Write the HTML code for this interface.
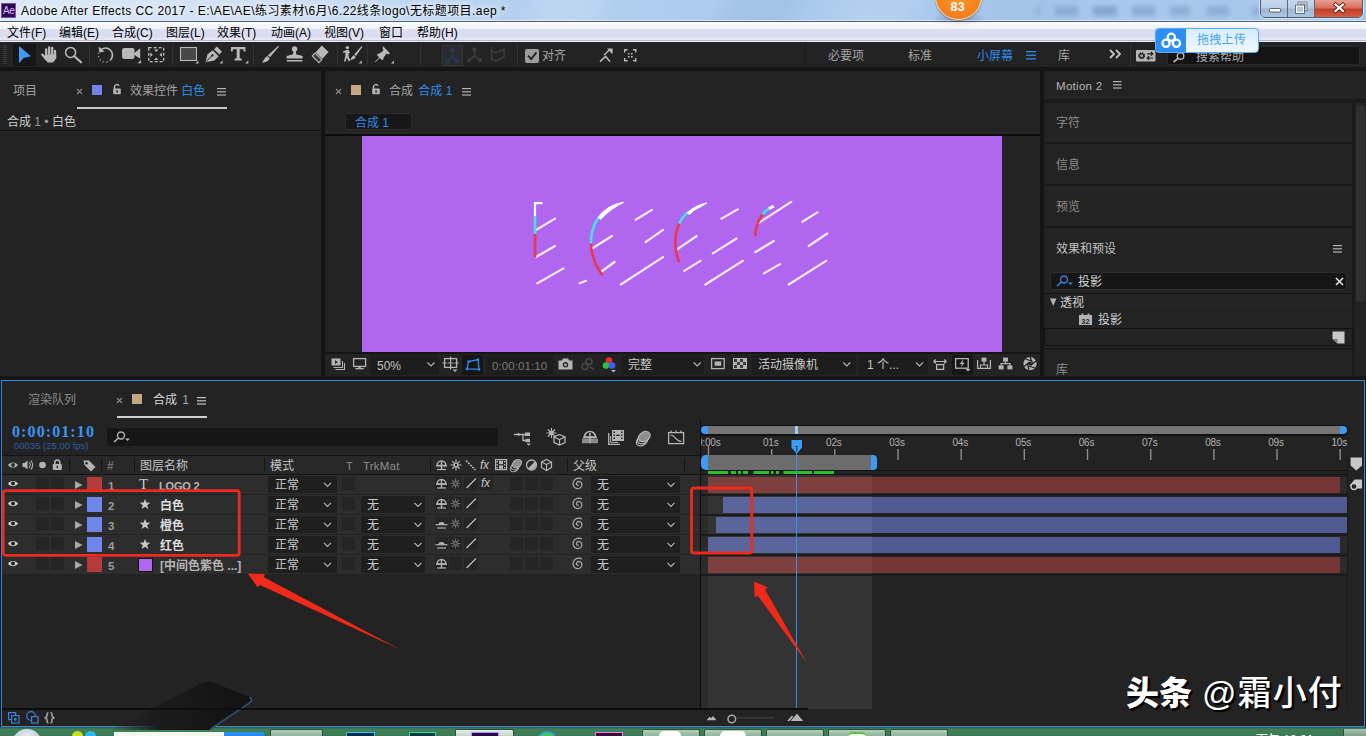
<!DOCTYPE html>
<html lang="zh-CN">
<head>
<meta charset="utf-8">
<title>Adobe After Effects CC 2017</title>
<style>
*{box-sizing:border-box;margin:0;padding:0}
html,body{width:1366px;height:736px;overflow:hidden;background:#151515}
body{position:relative;font-family:"Liberation Sans","Noto Sans CJK SC",sans-serif;font-size:12px;color:#a7a7a7;line-height:1}
.a{position:absolute}
.t{position:absolute;white-space:nowrap;line-height:14px;height:14px}
svg{position:absolute;overflow:visible}
.pn{position:absolute;background:#232323}
.bl{color:#2d8ceb}
.hi{color:#d2d2d2}
.mn{top:25px;font-size:12px;color:#000;line-height:16px;height:16px}
.row{left:2px;width:698px;height:19px;background:#2d2d2d;border-bottom:0}
.cell{height:13px;background:#252525}
.dd{height:17px;background:#1f1f1f;border-radius:1px}
.rl{top:436px;font-size:10px;letter-spacing:-.2px;color:#b2b2b2;line-height:13px;height:13px}
.tb{top:729px;height:7px;background:linear-gradient(180deg,#b4ccb8,#8fb49c);border:1px solid #2c5040;border-bottom:0;border-radius:2px 2px 0 0}
/*SECTION-CSS*/
</style>
</head>
<body>
<!-- ===== TITLE BAR ===== -->
<div id="titlebar" class="a" style="left:0;top:0;width:1366px;height:21px;background:linear-gradient(90deg,#dce9f7 0,#cfe0f3 250px,#b4d0ef 520px,#a9c9ed 800px,#a6c7ec 1366px)"></div>

<div class="a" style="left:1px;top:3px;width:15px;height:15px;background:#2c0a50;border:1px solid #7a4fb0"></div>
<div class="t" style="left:3px;top:4px;font-size:10px;color:#d9b8ff;letter-spacing:-0.3px">Ae</div>
<div class="t" id="ttl" style="left:21px;top:3px;font-size:12px;letter-spacing:.43px;color:#000;line-height:16px;height:16px;text-shadow:0 0 6px #fff,0 0 8px #fff">Adobe After Effects CC 2017 - E:\AE\AE\练习素材\6月\6.22线条logo\无标题项目.aep *</div>
<div class="a" style="left:0;top:0;width:1366px;height:20px;background:linear-gradient(115deg,rgba(255,255,255,0) 38%,rgba(255,255,255,.13) 40%,rgba(255,255,255,.13) 43.500%,rgba(255,255,255,0) 45%,rgba(255,255,255,0) 52%,rgba(90,130,190,.10) 54%,rgba(90,130,190,.10) 57%,rgba(255,255,255,0) 59%,rgba(255,255,255,.12) 63%,rgba(255,255,255,.12) 66%,rgba(255,255,255,0) 68%,rgba(90,130,190,.08) 76%,rgba(255,255,255,0) 80%)"></div>
<div class="a" style="left:0;top:20px;width:1366px;height:1px;background:rgba(225,238,250,.8)"></div>
<!--TITLE-->
<!-- ===== MENU BAR ===== -->
<div id="menubar" class="a" style="left:0;top:21px;width:1366px;height:21px;background:linear-gradient(180deg,#4f5f70 0,#4f5f70 1px,#fdfdfe 1px,#f0f2f9 7.500px,#dde0f1 8.500px,#d9dcf0 15px,#e6e8f5 18.500px,#b4b8c8 19px,#b4b8c8 20px,#eef0f6 20px,#eef0f6 21px)"></div>

<div class="t mn" style="left:7px">文件(F)</div>
<div class="t mn" style="left:59px">编辑(E)</div>
<div class="t mn" style="left:112px">合成(C)</div>
<div class="t mn" style="left:166px">图层(L)</div>
<div class="t mn" style="left:217px">效果(T)</div>
<div class="t mn" style="left:271px">动画(A)</div>
<div class="t mn" style="left:324px">视图(V)</div>
<div class="t mn" style="left:379px">窗口</div>
<div class="t mn" style="left:417px">帮助(H)</div>
<!--MENU-->
<!-- ===== TOOLBAR ===== -->
<div id="toolbar" class="a" style="left:0;top:42px;width:1366px;height:25px;background:#232323"></div>

<svg id="tools1" style="left:0;top:42px" width="700" height="26" viewBox="0 42 700 26" fill="#b9b9b9" stroke="none">
 <g fill="#3a3a3a"><rect x="3" y="45" width="4" height="1"/><rect x="3" y="47" width="4" height="1"/><rect x="3" y="49" width="4" height="1"/><rect x="3" y="51" width="4" height="1"/><rect x="3" y="53" width="4" height="1"/><rect x="3" y="55" width="4" height="1"/><rect x="3" y="57" width="4" height="1"/><rect x="3" y="59" width="4" height="1"/><rect x="3" y="61" width="4" height="1"/><rect x="3" y="63" width="4" height="1"/></g>
 <rect x="13" y="44" width="23" height="22" fill="#161616"/>
 <!-- selection -->
 <path d="M19 46 L31 56.3 L23.6 58 L19 63.2Z" fill="#3d9bf7"/>
 <!-- hand -->
 <g stroke="#b9b9b9" stroke-width="2.3" stroke-linecap="round" fill="none"><path d="M46.2 49.5V56"/><path d="M49.2 47.3V56"/><path d="M52.2 48V56"/><path d="M55 51V57"/><path d="M42.3 54.6L46 59"/></g>
 <path d="M45 54.5H56.2V58.5L53 62.6H47.6L44.3 58Z"/>
 <!-- zoom -->
 <circle cx="70.6" cy="52.4" r="5" fill="none" stroke="#b9b9b9" stroke-width="1.5"/><path d="M74.3 56.3L81 62.3" stroke="#b9b9b9" stroke-width="2.2" stroke-linecap="round"/>
 <rect x="89" y="44" width="1" height="21" fill="#343434"/>
 <!-- rotate -->
 <path d="M100.3 50.2A7 7 0 0 1 110.5 60" fill="none" stroke="#b9b9b9" stroke-width="1.6"/>
 <path d="M110.5 60A7 7 0 0 1 100.3 50.2" fill="none" stroke="#8a8a8a" stroke-width="1.5" stroke-dasharray="1.3 2.2"/>
 <path d="M98.6 46.6L99.4 52.6L104.6 51.6Z"/>
 <!-- camera -->
 <rect x="122" y="48" width="12.5" height="11" rx="2.2"/><path d="M133 54L140.2 48.3V58.8Z"/><path d="M141 60V63.2H137.6Z"/>
 <!-- pan behind -->
 <rect x="148.7" y="47.7" width="15" height="14" fill="none" stroke="#b9b9b9" stroke-width="1.3" stroke-dasharray="3 2"/>
 <path d="M154 49.5H158.4L156.2 52Z M154 60H158.4L156.2 57.5Z M150.3 52.6V57L152.8 54.8Z M162 52.6V57L159.5 54.8Z"/>
 <rect x="172" y="44" width="1" height="21" fill="#343434"/>
 <!-- rect -->
 <rect x="180.5" y="47.5" width="16" height="13" fill="#484848" stroke="#b9b9b9" stroke-width="1.1"/><path d="M198.5 60.5V63.6H195.4Z"/>
 <!-- pen -->
 <path d="M205.4 62.3L207.6 54.2L212.6 50.2L218.6 56.2L214.4 60.6Z"/><path d="M214 49.2L216.8 46.6L222 51.8L219.3 54.5Z"/>
 <path d="M205.8 61.8L211.6 56" stroke="#232323" stroke-width="1"/><circle cx="212.4" cy="55.4" r="1.2" fill="#232323"/><path d="M222.6 60.5V63.6H219.5Z"/>
 <!-- T -->
 <path d="M231 47H245.4V51.4H243.8L243.3 49.2H239.7V58.2L241.8 58.8V60.6H234.6V58.8L236.7 58.2V49.2H233.1L232.6 51.4H231Z"/><path d="M248.3 60.5V63.6H245.2Z"/>
 <rect x="253" y="44" width="1" height="21" fill="#343434"/>
 <!-- brush -->
 <path d="M278.3 45.8L279 46.6L270 57.2L267.8 55.4Z"/><path d="M267.2 56L269.6 58.2C269 61 265.6 62.6 261.8 62.4C263.8 60.8 264.4 58 267.2 56Z"/>
 <!-- stamp -->
 <circle cx="294.6" cy="49" r="2.7"/><path d="M293.2 50.5H296V54.2L302.6 56V58.6H286.6V56L293.2 54.2Z"/><rect x="286.8" y="60" width="15.6" height="1.5"/>
 <!-- eraser -->
 <path d="M321.8 45.4L328.6 52L322.4 58.8L315.6 52.2Z"/><path d="M315 53L321.8 59.6L319 62.6L312.2 56Z" fill="#3a3a3a" stroke="#b9b9b9" stroke-width="1.1"/>
 <rect x="337" y="44" width="1" height="21" fill="#343434"/>
 <!-- roto -->
 <circle cx="347.4" cy="47.6" r="1.7"/><path d="M343 51.6L346.2 50H348.6L350 52.6L348.6 53.4V56.6L350.4 60.6L348.8 61.4L346.8 57.6L345.6 61.4H344L345.4 55.6V52.2L343.6 53.2Z"/>
 <path d="M361.6 46L362.4 46.8L356 56L354.2 54.6Z"/><path d="M353.6 55.2L355.8 57C355 59 352.4 60 350 59.6C351.4 58.4 351.8 56.4 353.6 55.2Z"/><path d="M361.8 60.5V63.6H358.7Z"/>
 <rect x="367" y="44" width="1" height="21" fill="#343434"/>
 <!-- pin -->
 <path d="M382.6 45.8L390 53.2L388.2 54.6L386.6 53.6L383.6 57.6L383.4 59.8L381.6 59.8L379.8 58L375.4 62.2L375 61.8L379.2 57.4L377.4 55.6L377.4 53.8L379.6 53.6L383.6 50.6L382.6 49L383 47.4Z"/><path d="M394 60.5V63.6H390.9Z"/>
 <rect x="420" y="44" width="1" height="21" fill="#343434"/>
 <!-- axis modes (dim) -->
 <rect x="442.5" y="45.5" width="20" height="20" fill="#2a2b2f" stroke="#34353a"/>
 <g stroke="#2c3652" stroke-width="1.8" fill="#2c3652"><path d="M452.5 50V57L447.5 61.5M452.5 57L457.5 61.5" fill="none"/><circle cx="452.5" cy="50" r="1.6"/><circle cx="447.5" cy="61.5" r="1.3"/><circle cx="457.5" cy="61.5" r="1.3"/></g>
 <g stroke="#3d3d3d" stroke-width="1.6" fill="#3d3d3d"><path d="M474.5 50V56L469 60M474.5 56L480 60" fill="none"/><circle cx="474.500" cy="49.500" r="1.4"/><circle cx="469" cy="60.2" r="1.3"/><circle cx="480" cy="60.2" r="1.3"/></g>
 <g stroke="#3d3d3d" stroke-width="1.5" fill="none"><path d="M491.500 47V61"/><path d="M491.500 51L496 53L504 49V57L496 61L491.500 59"/></g>
 <rect x="517" y="44" width="1" height="21" fill="#343434"/>
 <!-- checkbox -->
 <rect x="525" y="49" width="14" height="14" rx="2" fill="#9c9c9c"/><path d="M528 55.6L531.2 59L536.4 52.400" fill="none" stroke="#232323" stroke-width="1.9"/>
 <!-- snap icons -->
 <path d="M600 61.600L605.500 56.400L610 61.600" fill="none" stroke="#b9b9b9" stroke-width="1.500"/><path d="M604 55L610 49.500" stroke="#b9b9b9" stroke-width="1.4"/><path d="M607 48.600H612.600V54.200Z"/>
 <g fill="none" stroke="#b9b9b9" stroke-width="1.400"><path d="M624.700 52.500V49.700H627.500M633 49.700H635.800V52.500M635.800 58V60.800H633M627.500 60.800H624.700V58"/></g><path d="M628 53h1.600v1.600h-1.600zM631 53h1.600v1.600h-1.600zM628 56h1.600v1.600h-1.600zM631 56h1.600v1.600h-1.600z"/>
</svg>
<div class="t" style="left:542px;top:49px;font-size:12px;color:#a4a4a4">对齐</div>

<div class="a" style="left:805px;top:43px;width:1px;height:24px;background:#1a1a1a"></div>
<div class="t" style="left:828px;top:49px;font-size:12px;color:#a4a4a4">必要项</div>
<div class="t" style="left:908px;top:49px;font-size:12px;color:#a4a4a4">标准</div>
<div class="t bl" style="left:977px;top:49px;font-size:12px">小屏幕</div>
<svg style="left:1026px;top:51px" width="10" height="9" fill="#2d8ceb"><rect y="0" width="10" height="1.3"/><rect y="3.6" width="10" height="1.3"/><rect y="7.200" width="10" height="1.3"/></svg>
<div class="t" style="left:1058px;top:49px;font-size:12px;color:#a4a4a4">库</div>
<svg style="left:1109px;top:49px" width="12" height="10" fill="none" stroke="#c4c4c4" stroke-width="1.800"><path d="M1 1L5 5L1 9M7 1L11 5L7 9"/></svg>
<div class="a" style="left:1130px;top:44px;width:1px;height:22px;background:#343434"></div>
<svg style="left:1136px;top:50px" width="20" height="12"><rect width="19.500" height="11.500" rx="1" fill="#b4b4b4"/><circle cx="5.600" cy="5.800" r="2.600" fill="none" stroke="#232323" stroke-width="1.800" stroke-dasharray="1.300 0.750"/><circle cx="5.600" cy="5.800" r="2" fill="none" stroke="#232323" stroke-width="1.200"/><path d="M11 3.800H16.500M14.800 2L16.800 3.800L14.800 5.600M17 8H11.500M13.200 6.200L11.200 8L13.200 9.800" fill="none" stroke="#232323" stroke-width="1.200"/></svg>
<div class="a" style="left:1167px;top:46px;width:193px;height:19px;background:#141414;border:1px solid #2b2b2b;border-radius:2px"></div>
<svg style="left:1172px;top:52px" width="14" height="11" fill="none" stroke="#b0b0b0" stroke-width="1.400"><circle cx="8.500" cy="4" r="3.300"/><path d="M6 6.500L1.500 10" stroke-width="1.700"/></svg>
<div class="t" style="left:1196px;top:50px;font-size:12px;color:#b0b0b0">搜索帮助</div>
<!--TOOLS-->
<!-- ===== PANELS ===== -->
<div id="p-left" class="pn" style="left:0;top:71px;width:321px;height:305px"></div>

<div class="t" style="left:13px;top:84px;font-size:12px;color:#a2a2a2">项目</div>
<svg style="left:76px;top:88px" width="7" height="7" stroke="#8a8a8a" stroke-width="1.100"><path d="M1 1L6 6M6 1L1 6"/></svg>
<div class="a" style="left:92px;top:85px;width:10px;height:10px;background:#7383ea"></div>
<svg class="lock" style="left:112px;top:83px" width="10" height="12"><path d="M2.500 6V3.800A2.400 2.400 0 0 1 7 2.800" fill="none" stroke="#b4b4b4" stroke-width="1.500"/><rect x="1.200" y="5.600" width="7.600" height="5.600" rx=".8" fill="#b4b4b4"/><rect x="4.300" y="7.300" width="1.500" height="2.300" fill="#232323"/></svg>
<div class="t" style="left:130px;top:84px;font-size:12px;color:#a2a2a2">效果控件 <span class="bl">白色</span></div>
<svg style="left:217px;top:88px" width="10" height="8" fill="#b4b4b4"><rect y="0" width="9" height="1.200"/><rect y="3.200" width="9" height="1.200"/><rect y="6.400" width="9" height="1.200"/></svg>
<div class="a" style="left:77px;top:107px;width:150px;height:2px;background:#c6c6c6"></div>
<div class="t" style="left:7px;top:115px;font-size:12px;color:#cdcdcd">合成 <span style="color:#9a9a9a">1 •</span> 白色</div>
<div class="a" style="left:0;top:130px;width:320px;height:1px;background:#101010"></div>
<div class="a" style="left:0;top:131px;width:320px;height:1px;background:#2b2b2b"></div>
<!--LEFT-->
<div id="p-comp" class="pn" style="left:325px;top:71px;width:715px;height:305px"></div>

<svg style="left:335px;top:88px" width="7" height="7" stroke="#8a8a8a" stroke-width="1.100"><path d="M1 1L6 6M6 1L1 6"/></svg>
<div class="a" style="left:351px;top:85px;width:10px;height:10px;background:#c4a882"></div>
<svg class="lock" style="left:371px;top:83px" width="10" height="12"><path d="M2.500 6V3.800A2.400 2.400 0 0 1 7 2.800" fill="none" stroke="#b4b4b4" stroke-width="1.500"/><rect x="1.200" y="5.600" width="7.600" height="5.600" rx=".8" fill="#b4b4b4"/><rect x="4.300" y="7.300" width="1.500" height="2.300" fill="#232323"/></svg>
<div class="t" style="left:389px;top:84px;font-size:12px;color:#a2a2a2">合成 <span class="bl" style="margin-left:2px">合成 1</span></div>
<svg style="left:462px;top:88px" width="10" height="8" fill="#b4b4b4"><rect y="0" width="9" height="1.200"/><rect y="3.200" width="9" height="1.200"/><rect y="6.400" width="9" height="1.200"/></svg>
<div class="a" style="left:345px;top:113px;width:67px;height:17px;background:#171717;border:1px solid #2c2c2c;border-radius:2px"></div>
<div class="t bl" style="left:355px;top:116px;font-size:12px">合成 1</div>
<div class="a" style="left:325px;top:131px;width:715px;height:3px;background:#272727"></div><div class="a" style="left:325px;top:134px;width:715px;height:2px;background:#0d0d0d"></div>
<div class="a" id="canvas" style="left:362px;top:136px;width:640px;height:216px;background:#b066ee"></div>
<div class="a" style="left:325px;top:352px;width:715px;height:2px;background:#151515"></div>
<svg id="art" style="left:362px;top:136px" width="640" height="216" viewBox="362 136 640 216" fill="none" stroke-linecap="round">
 <g stroke="#fdeaff" stroke-width="2.200">
  <path d="M536 230L555 218.600M536 257L555 246M537.400 283.300L563.500 268.400"/>
  <path d="M592 248.500L612 236M600.800 272L614.500 262M579.700 283.300L586 280.800"/>
  <path d="M635.700 219.800L651.900 209.900M645.600 242.200L663 229.800M620.800 284.500L663 257.200"/>
  <path d="M676.700 249.700L696.700 236M684.200 270.900L700.400 260.900"/>
  <path d="M721.500 218.600L737.700 209.400M712.800 253.400L736.500 238.500M705.400 284.500L742.700 260.900"/>
  <path d="M757.600 223.600L791.200 201.900M755.200 252.200L773.800 241M763.900 273.400L780 264.100"/>
  <path d="M802.400 221.800L817.400 212.400M808.700 246L827.300 233.500M788.700 284.500L826.100 260.900"/>
 </g>
 <!-- letter 1 -->
 <g stroke-linecap="butt" stroke-width="2.600">
  <path d="M535 257.500V234" stroke="#e8384f"/><path d="M535 234V216" stroke="#45e0e0"/><path d="M535 216V203.200H542.500" stroke="#fff" stroke-width="2.200"/>
 </g>
 <!-- O 1 -->
 <g stroke-linecap="butt" stroke-width="2.600">
  <path d="M602 274.600Q591.500 260 590.900 243.500" stroke="#e8384f" stroke-linecap="round"/>
  <path d="M590.900 243.500Q591 228 598.400 217.400" stroke="#45e0e0"/>
  <path d="M598.400 217.400Q607 205.500 623.200 202.400Q611 208 600.500 219Z" fill="#fff" stroke="#fff" stroke-width="1.200" stroke-linejoin="round"/>
 </g>
 <!-- O 2 -->
 <g stroke-linecap="butt" stroke-width="2.600">
  <path d="M678.700 261Q671.500 241 679.200 223.600" stroke="#e8384f" stroke-linecap="round"/>
  <path d="M679.200 223.600Q682.500 216.500 688 212.400" stroke="#45e0e0"/>
  <path d="M687.600 212.800Q695 205.500 706.600 203L699 207.500Q693 210 689.500 214.200Z" fill="#fff" stroke="#fff" stroke-width="1.200" stroke-linejoin="round"/>
 </g>
 <!-- O 3 -->
 <g stroke-linecap="butt" stroke-width="2.600">
  <path d="M755.200 234.800Q756.500 222 762.600 214.400" stroke="#e8384f" stroke-linecap="round"/>
  <path d="M762.600 214.400Q765 211 768.800 208.600" stroke="#45e0e0"/>
  <path d="M768.800 208.600L773.800 206.200" stroke="#fff" stroke-width="3"/>
 </g>
</svg>

<!-- comp bottom bar -->
<svg id="cbar" style="left:325px;top:354px" width="715" height="22" viewBox="325 354 715 22" fill="#b4b4b4">
 <!-- always preview -->
 <rect x="331.500" y="358.500" width="9" height="7" fill="#b4b4b4"/><path d="M335 360.300V364L338 362.100Z" fill="#232323"/><path d="M333.500 367.500H342.500V361M335.500 369.500H344.500V363" fill="none" stroke="#b4b4b4" stroke-width="1.100"/>
 <!-- monitor -->
 <rect x="353.600" y="358.600" width="12" height="7.800" fill="none" stroke="#b4b4b4" stroke-width="1.300"/><rect x="358.500" y="366.400" width="2.200" height="1.800"/><rect x="355.500" y="368" width="8.200" height="1.300"/>
 <!-- 50% dropdown -->
 <rect x="370" y="355" width="69" height="20" rx="2" fill="#1d1d1d"/>
 <path d="M427.500 362.500L431 366L434.500 362.500" fill="none" stroke="#b4b4b4" stroke-width="1.200"/>
 <!-- ROI -->
 <rect x="444.600" y="358.600" width="12" height="8.800" fill="none" stroke="#b4b4b4" stroke-width="1.300"/><path d="M450.600 356.500V369.500M442.500 363H446.500M454.600 363H458.700" stroke="#b4b4b4" stroke-width="1.200"/><rect x="449" y="361.400" width="3.200" height="3.200" fill="#232323"/><path d="M450.600 359.500V366.500M447.600 363H453.600" stroke="#b4b4b4" stroke-width="1"/><path d="M452.500 369.500H457.500L455 372Z"/>
 <!-- mask toggle -->
 <rect x="462" y="355" width="21" height="20" rx="2" fill="#161616"/>
 <path d="M467 369L468.600 361.600L478 359.600L479 369.400Z" fill="none" stroke="#2d8ceb" stroke-width="1.300"/><g fill="#2d8ceb"><rect x="465.800" y="367.800" width="2.400" height="2.400"/><rect x="467.400" y="360.400" width="2.400" height="2.400"/><rect x="476.800" y="358.400" width="2.400" height="2.400"/><rect x="477.800" y="368.200" width="2.400" height="2.400"/></g>
 <!-- timecode -->
 <rect x="486" y="355" width="67" height="20" rx="2" fill="#1d1d1d"/>
 <!-- camera snapshot -->
 <path d="M558.500 360.500H561.800L563 358.600H568L569.200 360.500H572.500V369.500H558.500Z"/><circle cx="565.500" cy="364.800" r="2.700" fill="#232323"/><circle cx="565.500" cy="364.800" r="1.400"/>
 <!-- show snapshot (dim) -->
 <g fill="none" stroke="#484848" stroke-width="1.500"><circle cx="589" cy="361.500" r="3"/><circle cx="585" cy="366.500" r="3"/><path d="M590 367L594 369.500"/></g>
 <!-- rgb -->
 <circle cx="609" cy="360.600" r="3.300" fill="#e03030"/><circle cx="606" cy="365.600" r="3.300" fill="#30c040"/><circle cx="612" cy="365.600" r="3.300" fill="#4060f0"/><path d="M611 370H616L613.500 372.500Z"/>
 <!-- quality dropdown -->
 <rect x="622" y="355" width="82" height="20" rx="2" fill="#1d1d1d"/>
 <path d="M693.700 362.500L697.200 366L700.700 362.500" fill="none" stroke="#b4b4b4" stroke-width="1.200"/>
 <!-- safe zones -->
 <rect x="711.600" y="358.600" width="12.600" height="10" fill="none" stroke="#b4b4b4" stroke-width="1.300"/><rect x="714.600" y="361.400" width="6.600" height="4.400"/>
 <!-- transparency grid -->
 <rect x="733" y="358" width="14" height="11" fill="#b4b4b4"/><path d="M734 359h3v3h-3zM740 359h3v3h-3zM737 362h3v3h-3zM743 362h3v3h-3zM734 365h3v3h-3zM740 365h3v3h-3z" fill="#3a3a3a"/>
 <!-- camera dropdown -->
 <rect x="752" y="355" width="104" height="20" rx="2" fill="#1d1d1d"/>
 <path d="M843.300 362.500L846.800 366L850.300 362.500" fill="none" stroke="#b4b4b4" stroke-width="1.200"/>
 <rect x="859" y="355" width="69" height="20" rx="2" fill="#1d1d1d"/>
 <path d="M916 362.500L919.500 366L923 362.500" fill="none" stroke="#b4b4b4" stroke-width="1.200"/>
 <!-- pixel aspect -->
 <path d="M933.500 361.500H946.500M933.500 361.500L936 359.500M933.500 361.500L936 363.500M946.500 361.500L944 359.500M946.500 361.500L944 363.500" fill="none" stroke="#b4b4b4" stroke-width="1.200"/><rect x="936.600" y="364.600" width="7" height="4.800" fill="none" stroke="#b4b4b4" stroke-width="1.300"/>
 <!-- fast previews -->
 <rect x="952" y="355" width="21" height="20" rx="2" fill="#161616"/>
 <rect x="955.600" y="358.600" width="12.600" height="9.600" fill="none" stroke="#b4b4b4" stroke-width="1.300"/><path d="M963.200 359.600L959.600 364H962L960.600 367.600L964.800 362.800H962.400Z"/><path d="M965.500 369H970.500L968 371.500Z"/>
 <!-- timeline -->
 <path d="M977.600 360V368.400H990.400V360" fill="none" stroke="#b4b4b4" stroke-width="1.300"/><rect x="981.500" y="357.600" width="5" height="4"/><path d="M984 361.600V365M980.500 368V365H987.500V368" fill="none" stroke="#b4b4b4" stroke-width="1.200"/>
 <!-- flowchart -->
 <rect x="1003" y="357.600" width="5" height="4"/><rect x="998.600" y="365.400" width="5" height="4"/><rect x="1007.400" y="365.400" width="5" height="4"/><path d="M1005.500 361.600V363.600M1001 365.400V363.600H1010V365.400" fill="none" stroke="#b4b4b4" stroke-width="1.200"/>
 <!-- exposure aperture -->
 <circle cx="1030" cy="363.600" r="6.600"/><g stroke="#232323" stroke-width="1.200" fill="none"><path d="M1030 357L1032.500 363M1036 361L1030.500 365.500M1035 368L1028.500 366M1029 370.200L1027.500 364M1024 366.500L1029.500 362M1025.500 359L1031.500 361"/></g><circle cx="1030" cy="363.600" r="1.900" fill="#232323"/>
</svg>
<div class="t" style="left:377px;top:359px;font-size:12px;color:#c0c0c0">50%</div>
<div class="t" style="left:492px;top:359px;font-size:11.500px;color:#7a7a7a;letter-spacing:.1px">0:00:01:10</div>
<div class="t" style="left:628px;top:358px;font-size:12px;color:#c8c8c8">完整</div>
<div class="t" style="left:758px;top:358px;font-size:12px;color:#c8c8c8">活动摄像机</div>
<div class="t" style="left:867px;top:358px;font-size:12px;color:#c8c8c8">1 个...</div>
<!--COMP-->
<div id="p-right" class="pn" style="left:1044px;top:71px;width:322px;height:305px;background:#1a1a1a"></div>

<div class="pn" style="left:1044px;top:71px;width:322px;height:28px"></div>
<div class="t" style="left:1056px;top:79px;font-size:11.500px;color:#b6b6b6;letter-spacing:.3px">Motion 2</div>
<svg style="left:1113px;top:81px" width="10" height="8" fill="#b4b4b4"><rect y="0" width="8.500" height="1.200"/><rect y="3.200" width="8.500" height="1.200"/><rect y="6.400" width="8.500" height="1.200"/></svg>
<div class="pn" style="left:1044px;top:103px;width:308px;height:39px"></div>
<div class="pn" style="left:1044px;top:144px;width:308px;height:40px"></div>
<div class="pn" style="left:1044px;top:186px;width:308px;height:40px"></div>
<div class="pn" style="left:1044px;top:228px;width:308px;height:120px"></div>
<div class="pn" style="left:1044px;top:350px;width:308px;height:26px"></div>
<div class="a" style="left:1355px;top:103px;width:11px;height:273px;background:#232323"></div>
<div class="a" style="left:1356px;top:105px;width:9px;height:197px;background:#2f2f2f;border-radius:4px"></div>
<div class="t" style="left:1056px;top:116px;font-size:12px;color:#8c8c8c">字符</div>
<div class="t" style="left:1056px;top:158px;font-size:12px;color:#8c8c8c">信息</div>
<div class="t" style="left:1056px;top:200px;font-size:12px;color:#8c8c8c">预览</div>
<div class="t" style="left:1056px;top:242px;font-size:12px;color:#c2c2c2">效果和预设</div>
<svg style="left:1333px;top:245px" width="10" height="8" fill="#b4b4b4"><rect y="0" width="9" height="1.200"/><rect y="3.200" width="9" height="1.200"/><rect y="6.400" width="9" height="1.200"/></svg>
<div class="a" style="left:1050px;top:272px;width:297px;height:18px;background:#161616;border:1px solid #2d2d2d;border-radius:3px"></div>
<svg style="left:1056px;top:275px" width="18" height="12" fill="none" stroke="#3a7fd8" stroke-width="1.400"><circle cx="8" cy="4.500" r="3.500"/><path d="M5.500 7L1 11" stroke-width="1.600"/><path d="M12 7.500H17L14.500 10Z" fill="#3a7fd8" stroke="none"/></svg>
<div class="t" style="left:1078px;top:275px;font-size:12px;color:#d4d4d4">投影</div>
<svg style="left:1335px;top:277px" width="9" height="9" stroke="#e0e0e0" stroke-width="1.600"><path d="M1 1L8 8M8 1L1 8"/></svg>
<div class="a" style="left:1044px;top:293px;width:308px;height:1px;background:#141414"></div>
<svg style="left:1050px;top:298px" width="7" height="9" fill="#b4b4b4"><path d="M0 .5H6.500L3.250 8Z"/></svg>
<div class="t" style="left:1060px;top:296px;font-size:12px;color:#cfcfcf">透视</div>
<div class="a" style="left:1044px;top:310px;width:308px;height:1px;background:#1f1f1f"></div>
<svg style="left:1079px;top:313px" width="13" height="12"><path d="M0 2H2.500V0.500H4.500V2H8.500V0.500H10.500V2H13V12H0Z" fill="#b4b4b4"/><text x="6.500" y="10.500" font-family="Liberation Sans,sans-serif" font-size="7.500" font-weight="bold" fill="#232323" text-anchor="middle">32</text></svg>
<div class="t" style="left:1098px;top:313px;font-size:12px;color:#cfcfcf">投影</div>
<div class="a" style="left:1044px;top:328px;width:309px;height:18px;border:1px solid #121212;background:#232323"></div>
<svg style="left:1332px;top:331px" width="13" height="13"><path d="M0.500 0.500H12.500V12.500H5.500L0.500 8Z" fill="#c8c8c8"/><path d="M0.500 8H5.500V12.500Z" fill="#7c7c7c"/></svg>
<div class="t" style="left:1056px;top:363px;font-size:12px;color:#8c8c8c">库</div>
<!--RIGHT-->
<!-- ===== TIMELINE ===== -->
<div id="p-tl" class="pn" style="left:1px;top:380px;width:1364px;height:347px;border:1px solid #3b86dc"></div>
<div class="t" style="left:28px;top:393px;font-size:12px;color:#8c8c8c">渲染队列</div>
<svg style="left:116px;top:397px" width="7" height="7" stroke="#8a8a8a" stroke-width="1.100"><path d="M1 1L6 6M6 1L1 6"/></svg>
<div class="a" style="left:132px;top:394px;width:10px;height:10px;background:#c4a882"></div>
<div class="t" style="left:153px;top:393px;font-size:12px;color:#d6d6d6">合成 <span style="color:#a8a8a8;margin-left:2px">1</span></div>
<svg style="left:197px;top:397px" width="10" height="8" fill="#c4c4c4"><rect y="0" width="9" height="1.200"/><rect y="3.200" width="9" height="1.200"/><rect y="6.400" width="9" height="1.200"/></svg>
<div class="a" style="left:117px;top:416px;width:90px;height:2px;background:#d0d0d0"></div>
<div class="t" style="left:12px;top:423px;font-family:'Liberation Serif',serif;font-weight:bold;font-size:16px;line-height:18px;height:18px;letter-spacing:1.1px;color:#3b93ef">0:00:01:10</div>
<div class="t" style="left:14px;top:440px;font-size:9.500px;line-height:12px;height:12px;color:#2c5fa4">00035 (25.00 fps)</div>
<div class="a" style="left:107px;top:428px;width:391px;height:18px;background:#161616;border-radius:2px"></div>
<svg style="left:113px;top:431px" width="18" height="12" fill="none" stroke="#b4b4b4" stroke-width="1.400"><circle cx="8" cy="4.500" r="3.500"/><path d="M5.500 7L1 11" stroke-width="1.600"/><path d="M12 7.500H17L14.500 10Z" fill="#b4b4b4" stroke="none"/></svg>
<svg style="left:510px;top:426px" width="180" height="22" viewBox="510 426 180 22" fill="#b4b4b4">
 <path d="M514 434.500H521M521 434.500H525M523 434.500V440.500H526" fill="none" stroke="#b4b4b4" stroke-width="1.300"/><path d="M518 432.800L521 434.500L518 436.200Z"/><rect x="525" y="432.500" width="5" height="3.600"/><rect x="525.500" y="438.800" width="4.500" height="3.400"/><path d="M526.500 443.500H531L528.750 445.700Z"/>
 <g stroke="#b4b4b4" stroke-width="1.200"><path d="M551.500 428V438M546.500 433H556.500M548 429.500L555 436.500M555 429.500L548 436.500"/></g><circle cx="551.500" cy="433" r="2.300"/>
 <path d="M559.500 434.500L565 437V442.500L559.500 445L554 442.500V437Z" fill="#232323" stroke="#b4b4b4" stroke-width="1.300"/><path d="M554 437L559.500 439.500L565 437M559.500 439.500V445" fill="none" stroke="#b4b4b4" stroke-width="1.200"/>
 <path d="M584.500 437A5.500 5.500 0 0 1 595.500 437Z" fill="none" stroke="#b4b4b4" stroke-width="1.500"/><path d="M583 436.600H597V438.200H583Z"/><rect x="589.200" y="433" width="1.600" height="8"/><rect x="582" y="438.600" width="16" height="4.600" fill="#8a8a8a"/><rect x="589.200" y="438.600" width="1.600" height="4.600" fill="#b4b4b4"/>
 <rect x="612" y="430" width="12" height="11" /><path d="M613.500 431.500h1.500v1.500h-1.500zM613.500 434.500h1.500v1.500h-1.500zM613.500 437.500h1.500v1.500h-1.500zM621 431.500h1.500v1.500h-1.500zM621 434.500h1.500v1.500h-1.500zM621 437.500h1.500v1.500h-1.500z" fill="#232323"/><rect x="616.200" y="434.700" width="3.600" height="1.300" fill="#232323"/><path d="M608.700 433V444.300H620" fill="none" stroke="#b4b4b4" stroke-width="1.300"/><path d="M610.600 436V442.400H618" fill="none" stroke="#b4b4b4" stroke-width="1"/>
 <ellipse cx="642" cy="441" rx="6" ry="4.300" transform="rotate(-32 642 441)" fill="#232323" stroke="#b4b4b4" stroke-width="1.200"/><ellipse cx="643" cy="439" rx="6" ry="4.300" transform="rotate(-32 643 439)" fill="#232323" stroke="#b4b4b4" stroke-width="1.200"/><ellipse cx="644.300" cy="436.600" rx="6.300" ry="4.600" transform="rotate(-32 644.300 436.600)" fill="#8e8e8e" stroke="#b4b4b4" stroke-width="1.200"/>
 <rect x="668.600" y="432.600" width="15" height="11" fill="none" stroke="#b4b4b4" stroke-width="1.300"/><path d="M671 430.500V432.500M676 430.500V432.500M681 430.500V432.500" stroke="#b4b4b4" stroke-width="1.300"/><path d="M670.500 435C675.500 435 675.500 441.500 681.500 441.500" fill="none" stroke="#b4b4b4" stroke-width="1.200"/>
</svg>
<div class="a" style="left:2px;top:455px;width:698px;height:1px;background:#141414"></div>
<div class="a" style="left:2px;top:456px;width:698px;height:18px;background:#282828"></div>
<div class="a" style="left:2px;top:474px;width:698px;height:1px;background:#151515"></div>
<!--ROWS-BEGIN-->
<svg id="tlhead" style="left:0;top:456px" width="700" height="18" viewBox="0 456 700 18" fill="#b4b4b4">
 <path d="M8 465C10 461.600 16 461.600 18 465C16 468.400 10 468.400 8 465Z"/><circle cx="13" cy="465" r="1.900" fill="#282828"/>
 <path d="M22.500 463H24.500L27.500 460.500V469.500L24.500 467H22.500Z"/><path d="M29 462.200A4 4 0 0 1 29 467.800M30.800 460.600A6.200 6.200 0 0 1 30.800 469.400" fill="none" stroke="#b4b4b4" stroke-width="1.100"/>
 <circle cx="42.500" cy="465" r="3.300"/>
 <path d="M54.800 464.500V462.600A2.500 2.500 0 0 1 59.800 462.600V464.500" fill="none" stroke="#b4b4b4" stroke-width="1.500"/><rect x="52.800" y="464" width="9" height="6" rx=".8"/><rect x="56.600" y="465.800" width="1.400" height="2.400" fill="#282828"/>
 <rect x="69" y="458" width="1" height="14" fill="#161616"/>
 <path d="M83.500 460.500H89L95.500 467L91 471.500L84.500 465Z"/><circle cx="86.600" cy="463.200" r="1.200" fill="#282828"/>
 <rect x="101" y="458" width="1" height="14" fill="#161616"/>
 <rect x="134" y="458" width="1" height="14" fill="#161616"/>
 <rect x="264" y="458" width="1" height="14" fill="#161616"/>
 <rect x="430" y="458" width="1" height="14" fill="#161616"/>
 <g><path d="M437 465.500A4.500 4.500 0 0 1 446 465.500Z" fill="none" stroke="#b4b4b4" stroke-width="1.300"/><path d="M436 465H447V466.400H436Z"/><rect x="440.800" y="461.500" width="1.400" height="8"/><path d="M437 469.500H446" stroke="#b4b4b4" stroke-width="1.200"/></g>
 <g stroke="#b4b4b4" stroke-width="1.200"><path d="M456 459.500V470.500M450.500 465H461.500M452.200 461.200L459.800 468.800M459.800 461.200L452.200 468.800"/></g><circle cx="456" cy="465" r="2.600"/><circle cx="456" cy="465" r="1.200" fill="#282828"/>
 <path d="M466 460.500L475.500 470" stroke="#b4b4b4" stroke-width="1.500" stroke-dasharray="2 1"/>
 <rect x="495.600" y="459.600" width="11" height="10" fill="none" stroke="#b4b4b4" stroke-width="1.200"/><path d="M496.500 461h1.400v1.400h-1.400zM496.500 464h1.400v1.400h-1.400zM496.500 467h1.400v1.400h-1.400zM504 461h1.400v1.400h-1.400zM504 464h1.400v1.400h-1.400zM504 467h1.400v1.400h-1.400z"/><rect x="499" y="460.800" width="4" height="3.400"/><rect x="499" y="465.400" width="4" height="3.400"/>
 <ellipse cx="514.500" cy="468" rx="4.600" ry="3.300" transform="rotate(-32 514.500 468)" fill="#282828" stroke="#b4b4b4" stroke-width="1"/><ellipse cx="515.500" cy="466" rx="4.600" ry="3.300" transform="rotate(-32 515.500 466)" fill="#282828" stroke="#b4b4b4" stroke-width="1"/><ellipse cx="517" cy="463.600" rx="5" ry="3.600" transform="rotate(-32 517 463.600)" fill="#8e8e8e" stroke="#b4b4b4" stroke-width="1"/>
 <circle cx="531.500" cy="465" r="5" fill="none" stroke="#b4b4b4" stroke-width="1.300"/><path d="M535 461.500A5 5 0 0 1 528 468.500Z"/>
 <path d="M546.500 459.500L551.500 462V467.500L546.500 470.500L541.500 467.500V462Z" fill="none" stroke="#b4b4b4" stroke-width="1.200"/><path d="M541.500 462L546.500 464.500L551.500 462M546.500 464.500V470.500" fill="none" stroke="#b4b4b4" stroke-width="1.100"/>
 <rect x="567" y="458" width="1" height="14" fill="#161616"/>
 <rect x="684" y="458" width="1" height="14" fill="#161616"/>
</svg>
<div class="t" style="left:107px;top:459px;font-size:12px;color:#8e8e8e">#</div>
<div class="t" style="left:140px;top:459px;font-size:12px;color:#c2c2c2">图层名称</div>
<div class="t" style="left:270px;top:459px;font-size:12px;color:#c2c2c2">模式</div>
<div class="t" style="left:346px;top:459px;font-size:11px;color:#8e8e8e">T</div>
<div class="t" style="left:363px;top:459px;font-size:11.500px;color:#8e8e8e;letter-spacing:.2px">TrkMat</div>
<div class="t" style="left:480px;top:458px;font-size:12px;font-style:italic;color:#c2c2c2;letter-spacing:-.3px">fx</div>
<div class="t" style="left:573px;top:459px;font-size:12px;color:#c2c2c2">父级</div>
<div class="a row" style="top:475px"></div>
<div class="a cell" style="left:36px;top:477px;width:13px"></div><div class="a cell" style="left:51px;top:477px;width:13px"></div>
<div class="a" style="left:87px;top:477px;width:15px;height:15px;background:#b53b3b"></div>
<div class="t" style="left:108px;top:479px;font-size:11.500px;font-weight:bold;color:#9c9c9c">1</div>
<div class="t" style="left:159px;top:479px;font-size:11px;font-weight:bold;color:#b8b8b8;letter-spacing:-.2px">LOGO 2</div>
<div class="a dd" style="left:268px;top:476px;width:69px"></div><div class="t" style="left:275px;top:478px;font-size:12px;color:#c8c8c8">正常</div>
<div class="a cell" style="left:342px;top:477px;width:13px"></div>
<div class="a cell" style="left:435px;top:477px;width:13px"></div>
<div class="a cell" style="left:449px;top:477px;width:13px"></div>
<div class="a cell" style="left:464px;top:477px;width:14px"></div>
<div class="a cell" style="left:480px;top:477px;width:13px"></div>
<div class="a cell" style="left:510px;top:477px;width:13px"></div>
<div class="a cell" style="left:525px;top:477px;width:13px"></div>
<div class="a cell" style="left:540px;top:477px;width:13px"></div>
<div class="a dd" style="left:591px;top:476px;width:89px"></div><div class="t" style="left:597px;top:478px;font-size:12px;color:#c8c8c8">无</div>
<div class="a row" style="top:495px"></div>
<div class="a cell" style="left:36px;top:497px;width:13px"></div><div class="a cell" style="left:51px;top:497px;width:13px"></div>
<div class="a" style="left:87px;top:497px;width:15px;height:15px;background:#6f86ea"></div>
<div class="t" style="left:108px;top:499px;font-size:11.500px;font-weight:bold;color:#9c9c9c">2</div>
<div class="t" style="left:160px;top:499px;font-size:12px;font-weight:bold;color:#dcdcdc">白色</div>
<div class="a dd" style="left:268px;top:496px;width:69px"></div><div class="t" style="left:275px;top:498px;font-size:12px;color:#c8c8c8">正常</div>
<div class="a cell" style="left:342px;top:497px;width:13px"></div>
<div class="a dd" style="left:361px;top:496px;width:64px"></div><div class="t" style="left:367px;top:498px;font-size:12px;color:#c8c8c8">无</div>
<div class="a cell" style="left:435px;top:497px;width:13px"></div>
<div class="a cell" style="left:449px;top:497px;width:13px"></div>
<div class="a cell" style="left:464px;top:497px;width:14px"></div>
<div class="a cell" style="left:510px;top:497px;width:13px"></div>
<div class="a cell" style="left:525px;top:497px;width:13px"></div>
<div class="a cell" style="left:540px;top:497px;width:13px"></div>
<div class="a dd" style="left:591px;top:496px;width:89px"></div><div class="t" style="left:597px;top:498px;font-size:12px;color:#c8c8c8">无</div>
<div class="a row" style="top:515px"></div>
<div class="a cell" style="left:36px;top:517px;width:13px"></div><div class="a cell" style="left:51px;top:517px;width:13px"></div>
<div class="a" style="left:87px;top:517px;width:15px;height:15px;background:#6f86ea"></div>
<div class="t" style="left:108px;top:519px;font-size:11.500px;font-weight:bold;color:#9c9c9c">3</div>
<div class="t" style="left:160px;top:519px;font-size:12px;font-weight:bold;color:#dcdcdc">橙色</div>
<div class="a dd" style="left:268px;top:516px;width:69px"></div><div class="t" style="left:275px;top:518px;font-size:12px;color:#c8c8c8">正常</div>
<div class="a cell" style="left:342px;top:517px;width:13px"></div>
<div class="a dd" style="left:361px;top:516px;width:64px"></div><div class="t" style="left:367px;top:518px;font-size:12px;color:#c8c8c8">无</div>
<div class="a cell" style="left:435px;top:517px;width:13px"></div>
<div class="a cell" style="left:449px;top:517px;width:13px"></div>
<div class="a cell" style="left:464px;top:517px;width:14px"></div>
<div class="a cell" style="left:510px;top:517px;width:13px"></div>
<div class="a cell" style="left:525px;top:517px;width:13px"></div>
<div class="a cell" style="left:540px;top:517px;width:13px"></div>
<div class="a dd" style="left:591px;top:516px;width:89px"></div><div class="t" style="left:597px;top:518px;font-size:12px;color:#c8c8c8">无</div>
<div class="a row" style="top:535px"></div>
<div class="a cell" style="left:36px;top:537px;width:13px"></div><div class="a cell" style="left:51px;top:537px;width:13px"></div>
<div class="a" style="left:87px;top:537px;width:15px;height:15px;background:#6f86ea"></div>
<div class="t" style="left:108px;top:539px;font-size:11.500px;font-weight:bold;color:#9c9c9c">4</div>
<div class="t" style="left:160px;top:539px;font-size:12px;font-weight:bold;color:#dcdcdc">红色</div>
<div class="a dd" style="left:268px;top:536px;width:69px"></div><div class="t" style="left:275px;top:538px;font-size:12px;color:#c8c8c8">正常</div>
<div class="a cell" style="left:342px;top:537px;width:13px"></div>
<div class="a dd" style="left:361px;top:536px;width:64px"></div><div class="t" style="left:367px;top:538px;font-size:12px;color:#c8c8c8">无</div>
<div class="a cell" style="left:435px;top:537px;width:13px"></div>
<div class="a cell" style="left:449px;top:537px;width:13px"></div>
<div class="a cell" style="left:464px;top:537px;width:14px"></div>
<div class="a cell" style="left:510px;top:537px;width:13px"></div>
<div class="a cell" style="left:525px;top:537px;width:13px"></div>
<div class="a cell" style="left:540px;top:537px;width:13px"></div>
<div class="a dd" style="left:591px;top:536px;width:89px"></div><div class="t" style="left:597px;top:538px;font-size:12px;color:#c8c8c8">无</div>
<div class="a row" style="top:555px"></div>
<div class="a cell" style="left:36px;top:557px;width:13px"></div><div class="a cell" style="left:51px;top:557px;width:13px"></div>
<div class="a" style="left:87px;top:557px;width:15px;height:15px;background:#b53b3b"></div>
<div class="t" style="left:108px;top:559px;font-size:11.500px;font-weight:bold;color:#9c9c9c">5</div>
<div class="t" style="left:160px;top:559px;font-size:12px;font-weight:bold;color:#b4b4b4">[中间色紫色 ...]</div>
<div class="a dd" style="left:268px;top:556px;width:69px"></div><div class="t" style="left:275px;top:558px;font-size:12px;color:#c8c8c8">正常</div>
<div class="a cell" style="left:342px;top:557px;width:13px"></div>
<div class="a dd" style="left:361px;top:556px;width:64px"></div><div class="t" style="left:367px;top:558px;font-size:12px;color:#c8c8c8">无</div>
<div class="a cell" style="left:435px;top:557px;width:13px"></div>
<div class="a cell" style="left:449px;top:557px;width:13px"></div>
<div class="a cell" style="left:464px;top:557px;width:14px"></div>
<div class="a cell" style="left:510px;top:557px;width:13px"></div>
<div class="a cell" style="left:525px;top:557px;width:13px"></div>
<div class="a cell" style="left:540px;top:557px;width:13px"></div>
<div class="a dd" style="left:591px;top:556px;width:89px"></div><div class="t" style="left:597px;top:558px;font-size:12px;color:#c8c8c8">无</div>
<svg id="tlrows" style="left:0;top:475px" width="700" height="100" viewBox="0 475 700 100" fill="#b4b4b4">
<path d="M8 483.5C10 480.0 16 480.0 18 483.5C16 487.0 10 487.0 8 483.5Z" fill="#d0d0d0"/><circle cx="13" cy="483.5" r="1.900" fill="#1e1e1e"/>
<path d="M75 481.0L82.500 485.0L75 489.0Z" fill="#a8a8a8"/>
<path d="M324.0 482.8L327.5 486.3L331.0 482.8" fill="none" stroke="#b4b4b4" stroke-width="1.200"/>
<path d="M667.5 482.8L671 486.3L674.5 482.8" fill="none" stroke="#b4b4b4" stroke-width="1.200"/>
<path d="M437 484.0A4.500 4.500 0 0 1 446 484.0Z" fill="none" stroke="#b4b4b4" stroke-width="1.300"/><path d="M436 483.5H447V484.9H436Z"/><rect x="440.800" y="480.0" width="1.400" height="8"/><path d="M437 488.0H446" stroke="#b4b4b4" stroke-width="1.200"/>
<g stroke="#6a6a6a" stroke-width="1.100"><path d="M455.500 478.5V488.5M450.500 483.5H460.500M452 480.0L459 487.0M459 480.0L452 487.0"/></g><circle cx="455.500" cy="483.5" r="2.400" fill="#6a6a6a"/><circle cx="455.500" cy="483.5" r="1.100" fill="#262626"/>
<path d="M466.500 488.0L476 478.5" stroke="#b4b4b4" stroke-width="1.500"/>
<path d="M581.97 478.96L580.46 478.32L578.87 478.11L577.31 478.30L575.89 478.88L574.69 479.79L573.80 480.94L573.24 482.25L573.05 483.63L573.22 484.97L573.71 486.19L574.49 487.22L575.47 487.98L576.59 488.45L577.75 488.61L578.88 488.46L579.90 488.04L580.74 487.39L581.37 486.57L581.75 485.65L581.86 484.70L581.74 483.79L581.38 482.97L580.85 482.31L580.20 481.82L579.47 481.55L578.73 481.47L578.03 481.59L577.42 481.88L576.94 482.30L576.60 482.80L576.43 483.34L576.41 483.87L576.53 484.36L576.76 484.76L577.07 485.05L577.42 485.24L577.77 485.30L578.10 485.26L578.37 485.14L578.56 484.96" fill="none" stroke="#a4a4a4" stroke-width="1.250" stroke-linejoin="round"/>
<path d="M8 503.5C10 500.0 16 500.0 18 503.5C16 507.0 10 507.0 8 503.5Z" fill="#d0d0d0"/><circle cx="13" cy="503.5" r="1.900" fill="#1e1e1e"/>
<path d="M75 501.0L82.500 505.0L75 509.0Z" fill="#a8a8a8"/>
<path d="M324.0 502.8L327.5 506.3L331.0 502.8" fill="none" stroke="#b4b4b4" stroke-width="1.200"/>
<path d="M414.5 502.8L418 506.3L421.5 502.8" fill="none" stroke="#b4b4b4" stroke-width="1.200"/>
<path d="M667.5 502.8L671 506.3L674.5 502.8" fill="none" stroke="#b4b4b4" stroke-width="1.200"/>
<path d="M437 504.0A4.500 4.500 0 0 1 446 504.0Z" fill="none" stroke="#b4b4b4" stroke-width="1.300"/><path d="M436 503.5H447V504.9H436Z"/><rect x="440.800" y="500.0" width="1.400" height="8"/><path d="M437 508.0H446" stroke="#b4b4b4" stroke-width="1.200"/>
<g stroke="#6a6a6a" stroke-width="1.100"><path d="M455.500 498.5V508.5M450.500 503.5H460.500M452 500.0L459 507.0M459 500.0L452 507.0"/></g><circle cx="455.500" cy="503.5" r="2.400" fill="#6a6a6a"/><circle cx="455.500" cy="503.5" r="1.100" fill="#262626"/>
<path d="M466.500 508.0L476 498.5" stroke="#b4b4b4" stroke-width="1.500"/>
<path d="M581.97 498.96L580.46 498.32L578.87 498.11L577.31 498.30L575.89 498.88L574.69 499.79L573.80 500.94L573.24 502.25L573.05 503.63L573.22 504.97L573.71 506.19L574.49 507.22L575.47 507.98L576.59 508.45L577.75 508.61L578.88 508.46L579.90 508.04L580.74 507.39L581.37 506.57L581.75 505.65L581.86 504.70L581.74 503.79L581.38 502.97L580.85 502.31L580.20 501.82L579.47 501.55L578.73 501.47L578.03 501.59L577.42 501.88L576.94 502.30L576.60 502.80L576.43 503.34L576.41 503.87L576.53 504.36L576.76 504.76L577.07 505.05L577.42 505.24L577.77 505.30L578.10 505.26L578.37 505.14L578.56 504.96" fill="none" stroke="#a4a4a4" stroke-width="1.250" stroke-linejoin="round"/>
<polygon points="145.0,498.9 146.4,502.6 150.3,502.8 147.2,505.2 148.3,509.0 145.0,506.8 141.7,509.0 142.8,505.2 139.7,502.8 143.6,502.6" fill="#c8c8c8"/>
<path d="M8 523.5C10 520.0 16 520.0 18 523.5C16 527.0 10 527.0 8 523.5Z" fill="#d0d0d0"/><circle cx="13" cy="523.5" r="1.900" fill="#1e1e1e"/>
<path d="M75 521.0L82.500 525.0L75 529.0Z" fill="#a8a8a8"/>
<path d="M324.0 522.8L327.5 526.3L331.0 522.8" fill="none" stroke="#b4b4b4" stroke-width="1.200"/>
<path d="M414.5 522.8L418 526.3L421.5 522.8" fill="none" stroke="#b4b4b4" stroke-width="1.200"/>
<path d="M667.5 522.8L671 526.3L674.5 522.8" fill="none" stroke="#b4b4b4" stroke-width="1.200"/>
<path d="M438.500 524.5A3 2.400 0 0 1 444.500 524.5Z"/><path d="M435.500 524.7H447.500" stroke="#b4b4b4" stroke-width="1.200"/><path d="M437 528.0H446" stroke="#b4b4b4" stroke-width="1.200"/>
<g stroke="#6a6a6a" stroke-width="1.100"><path d="M455.500 518.5V528.5M450.500 523.5H460.500M452 520.0L459 527.0M459 520.0L452 527.0"/></g><circle cx="455.500" cy="523.5" r="2.400" fill="#6a6a6a"/><circle cx="455.500" cy="523.5" r="1.100" fill="#262626"/>
<path d="M466.500 528.0L476 518.5" stroke="#b4b4b4" stroke-width="1.500"/>
<path d="M581.97 518.96L580.46 518.32L578.87 518.11L577.31 518.30L575.89 518.88L574.69 519.79L573.80 520.94L573.24 522.25L573.05 523.63L573.22 524.97L573.71 526.19L574.49 527.22L575.47 527.98L576.59 528.45L577.75 528.61L578.88 528.46L579.90 528.04L580.74 527.39L581.37 526.57L581.75 525.65L581.86 524.70L581.74 523.79L581.38 522.97L580.85 522.31L580.20 521.82L579.47 521.55L578.73 521.47L578.03 521.59L577.42 521.88L576.94 522.30L576.60 522.80L576.43 523.34L576.41 523.87L576.53 524.36L576.76 524.76L577.07 525.05L577.42 525.24L577.77 525.30L578.10 525.26L578.37 525.14L578.56 524.96" fill="none" stroke="#a4a4a4" stroke-width="1.250" stroke-linejoin="round"/>
<polygon points="145.0,518.9 146.4,522.6 150.3,522.8 147.2,525.2 148.3,529.0 145.0,526.8 141.7,529.0 142.8,525.2 139.7,522.8 143.6,522.6" fill="#c8c8c8"/>
<path d="M8 543.5C10 540.0 16 540.0 18 543.5C16 547.0 10 547.0 8 543.5Z" fill="#d0d0d0"/><circle cx="13" cy="543.5" r="1.900" fill="#1e1e1e"/>
<path d="M75 541.0L82.500 545.0L75 549.0Z" fill="#a8a8a8"/>
<path d="M324.0 542.8L327.5 546.3L331.0 542.8" fill="none" stroke="#b4b4b4" stroke-width="1.200"/>
<path d="M414.5 542.8L418 546.3L421.5 542.8" fill="none" stroke="#b4b4b4" stroke-width="1.200"/>
<path d="M667.5 542.8L671 546.3L674.5 542.8" fill="none" stroke="#b4b4b4" stroke-width="1.200"/>
<path d="M438.500 544.5A3 2.400 0 0 1 444.500 544.5Z"/><path d="M435.500 544.7H447.500" stroke="#b4b4b4" stroke-width="1.200"/><path d="M437 548.0H446" stroke="#b4b4b4" stroke-width="1.200"/>
<g stroke="#6a6a6a" stroke-width="1.100"><path d="M455.500 538.5V548.5M450.500 543.5H460.500M452 540.0L459 547.0M459 540.0L452 547.0"/></g><circle cx="455.500" cy="543.5" r="2.400" fill="#6a6a6a"/><circle cx="455.500" cy="543.5" r="1.100" fill="#262626"/>
<path d="M466.500 548.0L476 538.5" stroke="#b4b4b4" stroke-width="1.500"/>
<path d="M581.97 538.96L580.46 538.32L578.87 538.11L577.31 538.30L575.89 538.88L574.69 539.79L573.80 540.94L573.24 542.25L573.05 543.63L573.22 544.97L573.71 546.19L574.49 547.22L575.47 547.98L576.59 548.45L577.75 548.61L578.88 548.46L579.90 548.04L580.74 547.39L581.37 546.57L581.75 545.65L581.86 544.70L581.74 543.79L581.38 542.97L580.85 542.31L580.20 541.82L579.47 541.55L578.73 541.47L578.03 541.59L577.42 541.88L576.94 542.30L576.60 542.80L576.43 543.34L576.41 543.87L576.53 544.36L576.76 544.76L577.07 545.05L577.42 545.24L577.77 545.30L578.10 545.26L578.37 545.14L578.56 544.96" fill="none" stroke="#a4a4a4" stroke-width="1.250" stroke-linejoin="round"/>
<polygon points="145.0,538.9 146.4,542.6 150.3,542.8 147.2,545.2 148.3,549.0 145.0,546.8 141.7,549.0 142.8,545.2 139.7,542.8 143.6,542.6" fill="#c8c8c8"/>
<path d="M8 563.5C10 560.0 16 560.0 18 563.5C16 567.0 10 567.0 8 563.5Z" fill="#d0d0d0"/><circle cx="13" cy="563.5" r="1.900" fill="#1e1e1e"/>
<path d="M75 561.0L82.500 565.0L75 569.0Z" fill="#a8a8a8"/>
<path d="M324.0 562.8L327.5 566.3L331.0 562.8" fill="none" stroke="#b4b4b4" stroke-width="1.200"/>
<path d="M414.5 562.8L418 566.3L421.5 562.8" fill="none" stroke="#b4b4b4" stroke-width="1.200"/>
<path d="M667.5 562.8L671 566.3L674.5 562.8" fill="none" stroke="#b4b4b4" stroke-width="1.200"/>
<path d="M437 564.0A4.500 4.500 0 0 1 446 564.0Z" fill="none" stroke="#b4b4b4" stroke-width="1.300"/><path d="M436 563.5H447V564.9H436Z"/><rect x="440.800" y="560.0" width="1.400" height="8"/><path d="M437 568.0H446" stroke="#b4b4b4" stroke-width="1.200"/>
<path d="M466.500 568.0L476 558.5" stroke="#b4b4b4" stroke-width="1.500"/>
<path d="M581.97 558.96L580.46 558.32L578.87 558.11L577.31 558.30L575.89 558.88L574.69 559.79L573.80 560.94L573.24 562.25L573.05 563.63L573.22 564.97L573.71 566.19L574.49 567.22L575.47 567.98L576.59 568.45L577.75 568.61L578.88 568.46L579.90 568.04L580.74 567.39L581.37 566.57L581.75 565.65L581.86 564.70L581.74 563.79L581.38 562.97L580.85 562.31L580.20 561.82L579.47 561.55L578.73 561.47L578.03 561.59L577.42 561.88L576.94 562.30L576.60 562.80L576.43 563.34L576.41 563.87L576.53 564.36L576.76 564.76L577.07 565.05L577.42 565.24L577.77 565.30L578.10 565.26L578.37 565.14L578.56 564.96" fill="none" stroke="#a4a4a4" stroke-width="1.250" stroke-linejoin="round"/>
</svg>
<div class="t" style="left:139px;top:476px;font-family:'Liberation Serif',serif;font-size:15px;line-height:16px;height:16px;color:#c8c8c8">T</div>
<div class="t" style="left:481px;top:475px;font-size:12px;font-style:italic;color:#c2c2c2;letter-spacing:-.3px;line-height:16px;height:16px">fx</div>
<div class="a" style="left:138px;top:558px;width:15px;height:14px;background:#b066ee;border:1px solid #141414"></div>
<!--ROWS-END-->
<!--TR-BEGIN-->
<div class="a" style="left:700px;top:420px;width:1px;height:290px;background:#0c0c0c"></div>
<div class="a" style="left:701px;top:475px;width:7px;height:234px;background:#2b2b2b"></div>
<div class="a" style="left:708px;top:475px;width:164px;height:234px;background:#333333"></div>
<div class="a" style="left:700px;top:424.500px;width:648px;height:11px;background:#111;border-radius:5px"></div>
<div class="a" style="left:707px;top:426px;width:633px;height:8px;background:#757575"></div>
<div class="a" style="left:701px;top:426px;width:7px;height:8px;background:#3d9bf7;border-radius:5px 0 0 5px"></div>
<div class="a" style="left:1340px;top:426px;width:7px;height:8px;background:#3d9bf7;border-radius:0 5px 5px 0"></div>
<div class="a" style="left:795px;top:426px;width:3px;height:8px;background:#a5ccf5"></div>
<div class="t rl" style="left:700.500px;width:30px;text-align:left;overflow:hidden"><span style="margin-left:-3.5px">0:00s</span></div>
<div class="t rl" style="left:755.7px;width:30px;text-align:center">01s</div>
<div class="t rl" style="left:818.8px;width:30px;text-align:center">02s</div>
<div class="t rl" style="left:882.0px;width:30px;text-align:center">03s</div>
<div class="t rl" style="left:945.2px;width:30px;text-align:center">04s</div>
<div class="t rl" style="left:1008.3px;width:30px;text-align:center">05s</div>
<div class="t rl" style="left:1071.5px;width:30px;text-align:center">06s</div>
<div class="t rl" style="left:1134.7px;width:30px;text-align:center">07s</div>
<div class="t rl" style="left:1197.9px;width:30px;text-align:center">08s</div>
<div class="t rl" style="left:1261.0px;width:30px;text-align:center">09s</div>
<div class="t rl" style="left:1324.2px;width:30px;text-align:center">10s</div>
<svg style="left:700px;top:440px" width="660" height="24" viewBox="700 440 660 24" fill="#8c8c8c"><rect x="707.8" y="445" width="1.400" height="10"/><rect x="771.0" y="449" width="1.400" height="6"/><rect x="834.1" y="449" width="1.400" height="6"/><rect x="897.3" y="449" width="1.400" height="11"/><rect x="960.5" y="449" width="1.400" height="11"/><rect x="1023.6" y="449" width="1.400" height="11"/><rect x="1086.8" y="449" width="1.400" height="11"/><rect x="1150.0" y="449" width="1.400" height="11"/><rect x="1213.2" y="449" width="1.400" height="11"/><rect x="1276.3" y="449" width="1.400" height="11"/><rect x="1339.5" y="449" width="1.400" height="11"/></svg>
<div class="a" style="left:707px;top:455px;width:164px;height:15px;background:#6c6c6c"></div>
<div class="a" style="left:701px;top:455px;width:7px;height:15px;background:#3d9bf7;border-radius:5px 0 0 5px"></div>
<div class="a" style="left:871px;top:455px;width:6px;height:15px;background:#3d9bf7;border-radius:0 4px 4px 0"></div>
<div class="a" style="left:701px;top:470px;width:647px;height:1px;background:#141414"></div>
<div class="a" style="left:701px;top:474px;width:647px;height:1px;background:#141414"></div>
<svg style="left:700px;top:471px" width="140" height="3" viewBox="700 471 140 3" fill="#2dbf2d"><rect x="708" y="471" width="20" height="3"/><rect x="731" y="471" width="5" height="3"/><rect x="738" y="471" width="3" height="3"/><rect x="743" y="471" width="5" height="3"/><rect x="753.5" y="471" width="15.5" height="3"/><rect x="771" y="471" width="2.5" height="3"/><rect x="776" y="471" width="3" height="3"/><rect x="783.5" y="471" width="28.5" height="3"/><rect x="814" y="471" width="20" height="3"/></svg>
<div class="a" style="left:708px;top:477px;width:164px;height:16px;background:#7d403e"></div><div class="a" style="left:872px;top:477px;width:468px;height:16px;background:#743735"></div>
<div class="a" style="left:701px;top:494px;width:647px;height:1.500px;background:#1b1b1b"></div>
<div class="a" style="left:1340px;top:477px;width:7px;height:16px;background:#2a2a2a"></div>
<div class="a" style="left:723px;top:497px;width:149px;height:16px;background:#5a659b"></div><div class="a" style="left:872px;top:497px;width:475px;height:16px;background:#4f5a92"></div>
<div class="a" style="left:701px;top:514px;width:647px;height:1.500px;background:#1b1b1b"></div>
<div class="a" style="left:716px;top:517px;width:156px;height:16px;background:#5a659b"></div><div class="a" style="left:872px;top:517px;width:475px;height:16px;background:#4f5a92"></div>
<div class="a" style="left:701px;top:534px;width:647px;height:1.500px;background:#1b1b1b"></div>
<div class="a" style="left:708px;top:537px;width:164px;height:16px;background:#5a659b"></div><div class="a" style="left:872px;top:537px;width:468px;height:16px;background:#4f5a92"></div>
<div class="a" style="left:701px;top:554px;width:647px;height:1.500px;background:#1b1b1b"></div>
<div class="a" style="left:1340px;top:537px;width:7px;height:16px;background:#2a2a2a"></div>
<div class="a" style="left:708px;top:557px;width:164px;height:16px;background:#7d403e"></div><div class="a" style="left:872px;top:557px;width:468px;height:16px;background:#743735"></div>
<div class="a" style="left:701px;top:574px;width:647px;height:1.500px;background:#1b1b1b"></div>
<div class="a" style="left:1340px;top:557px;width:7px;height:16px;background:#2a2a2a"></div>
<div class="a" style="left:796px;top:450px;width:1.200px;height:259px;background:#3a8ee8"></div>
<svg style="left:790px;top:439px" width="14" height="15" viewBox="790 439 14 15"><path d="M791.500 440H802V447.500L797.500 453H796L791.500 447.500Z" fill="#3d9bf7"/><path d="M795.500 446.500H798M796.750 446.500V452" stroke="#1a3a5c" stroke-width="1" fill="none"/></svg>
<div class="a" style="left:1347px;top:455px;width:1px;height:254px;background:#1a1a1a"></div>
<svg style="left:1348px;top:455px" width="17" height="40" viewBox="1348 455 17 40"><path d="M1350.600 457.500H1362V465.500L1356.300 470.500L1350.600 465.500Z" fill="#c8c8c8"/><path d="M1349.500 486L1354.500 479.500H1362V488.500H1357" fill="#c8c8c8"/><circle cx="1354" cy="486.500" r="3" fill="#232323" stroke="#c8c8c8" stroke-width="1.300"/></svg>
<div class="a" style="left:2px;top:708px;width:806px;height:1.500px;background:#0c0c0c"></div>
<svg style="left:0;top:709px" width="820" height="18" viewBox="0 709 820 18" fill="none">
 <rect x="8.600" y="712.600" width="7" height="7" stroke="#3a7fd8" stroke-width="1.200"/><rect x="11.600" y="715.600" width="7.400" height="7.400" fill="#232323" stroke="#3a7fd8" stroke-width="1.200"/><rect x="14" y="718" width="2.600" height="2.600" fill="#3a7fd8"/>
 <circle cx="31" cy="716" r="4.300" stroke="#3a7fd8" stroke-width="1.200"/><rect x="31.600" y="716.600" width="6.400" height="6.400" fill="#232323" stroke="#3a7fd8" stroke-width="1.200"/>
 <path d="M48.500 712.500C47 712.500 47 714 47 715.500C47 717 46 717.500 44.500 717.800C46 718 47 718.600 47 720C47 721.500 47 723 48.500 723M50.500 712.500C52 712.500 52 714 52 715.500C52 717 53 717.500 54.500 717.800C53 718 52 718.600 52 720C52 721.500 52 723 50.500 723" stroke="#9a9a9a" stroke-width="1.700"/>
 <path d="M706.500 720.300L709.500 716.800L711 718.300L713 716L716.500 720.300Z" fill="#b4b4b4"/>
 <path d="M737 717.700H774" stroke="#3c3c3c" stroke-width="1.600"/>
 <circle cx="731.800" cy="719" r="3.800" stroke="#a8a8a8" stroke-width="1.500" fill="#232323"/>
 <path d="M787 721L792 715.500L793.200 716.800L789.500 721Z" fill="#b4b4b4"/><path d="M790.500 721L797 713.800L803.200 721Z" fill="#b4b4b4"/>
</svg>
<!--TR-END-->
<!--TL-->
<!-- ===== TASKBAR ===== -->


<div class="a" style="left:0;top:727px;width:1366px;height:9px;background:linear-gradient(180deg,#2c5c46 0,#3f7f58 2px,#3c7a52 100%)"></div>
<div class="a" style="left:12px;top:729px;width:30px;height:30px;border-radius:50%;background:radial-gradient(circle at 50% 30%,#e8eef0,#9fb4c0)"></div>
<div class="a" style="left:72px;top:731px;width:11px;height:11px;border-radius:50%;background:#c8e020"></div>
<div class="a" style="left:85px;top:731px;width:11px;height:11px;border-radius:50%;background:#30b8f0"></div>
<div class="a" style="left:114px;top:732px;width:110px;height:4px;background:#f4f6f0"></div>
<div class="a" style="left:224px;top:732px;width:40px;height:4px;background:#2a8cf0"></div>
<div class="a tb" style="left:270px;width:53px"></div>
<div class="a" style="left:346px;top:732px;width:29px;height:4px;background:#0a2a4a;border:1.500px solid #30c8f0;border-bottom:0"></div>
<div class="a" style="left:409px;top:732px;width:27px;height:4px;background:#0a3a3a;border:1.500px solid #20d8b8;border-bottom:0"></div>
<div class="a tb" style="left:455px;width:59px;background:linear-gradient(180deg,#e4ece6,#c4d4c8)"></div>
<div class="a" style="left:471px;top:732px;width:28px;height:4px;background:#2a0a4a;border:1.500px solid #b890f0;border-bottom:0"></div>
<div class="a" style="left:537px;top:731px;width:20px;height:20px;border-radius:50%;background:#40c850;border:2px solid #38a0d8"></div>
<div class="a" style="left:595px;top:732px;width:28px;height:4px;background:#3a0a3a;border:1.500px solid #e080e0;border-bottom:0"></div>
<div class="a tb" style="left:642px;width:58px"></div><div class="a" style="left:659px;top:731px;width:22px;height:10px;border-radius:8px;background:#fff"></div>
<div class="a tb" style="left:704px;width:58px"></div><div class="a" style="left:720px;top:731px;width:26px;height:10px;border-radius:6px;background:#fff"></div>
<div class="a tb" style="left:766px;width:58px"></div>
<div class="a tb" style="left:828px;width:58px"></div><div class="a" style="left:848px;top:732px;width:18px;height:10px;border-radius:8px;background:#f4fff0;border-top:2px solid #60c040"></div>
<div class="a tb" style="left:890px;width:58px"></div>
<div class="t" style="left:1256px;top:733px;font-size:12px;color:#fff">下午 12:01</div>
<div class="a" style="left:1343px;top:729px;width:23px;height:7px;background:linear-gradient(180deg,#a8c0b0,#7fa08c);border-left:1px solid #2c5040"></div>
<!--TASK-->

<!-- aero blurred background blobs -->
<div class="a" style="left:1030px;top:2px;width:240px;height:18px;filter:blur(2.200px);opacity:.8">
 <div class="a" style="left:6px;top:5px;width:5px;height:8px;background:#8fb0da"></div>
 <div class="a" style="left:25px;top:4px;width:23px;height:10px;background:#85a6d0"></div>
 <div class="a" style="left:63px;top:4px;width:24px;height:10px;background:#7f9fca"></div>
 <div class="a" style="left:102px;top:4px;width:23px;height:10px;background:#85a6d0"></div>
 <div class="a" style="left:140px;top:4px;width:20px;height:10px;background:#88a9d3"></div>
 <div class="a" style="left:177px;top:4px;width:22px;height:10px;background:#88a9d3"></div>
 <div class="a" style="left:222px;top:5px;width:8px;height:9px;background:#8cacd6"></div>
</div>
<!-- window buttons -->
<div class="a" style="left:1260px;top:-2px;width:103px;height:20px;border:1px solid #4a5a70;border-radius:0 0 5px 5px;overflow:hidden;box-shadow:0 0 0 1px rgba(255,255,255,.55)">
 <div class="a" style="left:0;top:0;width:27px;height:20px;background:linear-gradient(180deg,#c9d9ec 0,#b8cce4 45%,#9db6d4 50%,#b4c9e2 100%);border-right:1px solid #5a6a80"></div>
 <div class="a" style="left:27px;top:0;width:27px;height:20px;background:linear-gradient(180deg,#c9d9ec 0,#b8cce4 45%,#9db6d4 50%,#b4c9e2 100%);border-right:1px solid #5a6a80"></div>
 <div class="a" style="left:54px;top:0;width:48px;height:20px;background:linear-gradient(180deg,#e9a596 0,#d9705c 45%,#c43c26 50%,#d4583e 85%,#e0876a 100%)"></div>
</div>
<svg style="left:1260px;top:0" width="103" height="18">
 <rect x="9.500" y="8.500" width="11" height="3.500" rx=".8" fill="#fff" stroke="#4a5568" stroke-width=".9"/>
 <rect x="39" y="3" width="7" height="6.500" fill="none" stroke="#4a5568" stroke-width="2.600"/><rect x="39" y="3" width="7" height="6.500" fill="none" stroke="#fff" stroke-width="1.100"/>
 <rect x="36.500" y="6" width="7" height="6.500" fill="#b4c8e0" stroke="#4a5568" stroke-width="2.600"/><rect x="36.500" y="6" width="7" height="6.500" fill="#b4c8e0" stroke="#fff" stroke-width="1.100"/>
 <path d="M75.500 4.500L83 11M83 4.500L75.500 11" stroke="#5a2018" stroke-width="4" stroke-linecap="square"/><path d="M75.500 4.500L83 11M83 4.500L75.500 11" stroke="#fff" stroke-width="2.300" stroke-linecap="square"/>
</svg>
<!-- orange badge -->
<div class="a" style="left:936px;top:16px;width:46px;height:6px;border-radius:50%;background:rgba(60,70,90,.25);filter:blur(2px)"></div>
<div class="a" style="left:935px;top:-27px;width:47px;height:47px;border-radius:50%;background:radial-gradient(circle at 50% 40%,#ff9a2e 0,#f58220 60%,#ee7412 100%);border:1.500px solid #f3d9c0;box-shadow:0 1px 2px rgba(80,60,40,.5)"></div>
<div class="t" style="left:950.500px;top:0;font-size:12.500px;font-weight:bold;color:#fff;line-height:14px;height:14px;letter-spacing:.4px">83</div>
<!-- baidu upload widget -->
<div class="a" style="left:1155px;top:28px;width:104px;height:25px;border-radius:4px;background:linear-gradient(180deg,#d4ecfe 0,#e4f3ff 50%,#eef8ff 100%);border:1px solid #5eaef2;overflow:hidden;box-shadow:0 0 1px rgba(0,40,90,.4)">
 <div class="a" style="left:-1px;top:-1px;width:31px;height:25px;background:#2b8ff5"></div>
</div>
<svg style="left:1159px;top:31px" width="24" height="19" fill="none" stroke="#fff" stroke-width="2.300"><circle cx="12.300" cy="6.300" r="3.600"/><circle cx="7" cy="12.300" r="3.600"/><circle cx="17.400" cy="12.300" r="3.600"/></svg>
<div class="t" style="left:1197px;top:33px;font-size:12px;color:#4ba3ec;letter-spacing:.3px">拖拽上传</div>

<!-- phone reflection -->
<svg style="left:100px;top:676px;overflow:hidden" width="170" height="54" viewBox="100 676 170 54">
 <defs><linearGradient id="phg" x1="0" y1="0" x2="1" y2="0"><stop offset="0" stop-color="#222" stop-opacity="0"/><stop offset=".35" stop-color="#1b1b1c"/><stop offset="1" stop-color="#121213"/></linearGradient></defs>
 <path d="M203 682.500Q208 679.500 214 681.500L248 695.500Q254.500 698.500 250 702.500L208 731H108Z" fill="url(#phg)"/>
 <path d="M249.500 697Q253.500 699.500 249.500 703L210 729.500" fill="none" stroke="#34506c" stroke-width="2" opacity=".9"/>
 <path d="M204 682Q208 679.800 214 681.800L248 695.800" fill="none" stroke="#262a30" stroke-width="1"/>
</svg>
<div class="a" style="left:100px;top:708px;width:160px;height:1.500px;background:#0c0c0c;opacity:.8"></div>
<!-- annotations -->
<svg id="anno" style="left:0;top:0" width="1366" height="736" viewBox="0 0 1366 736" fill="none">
 <rect x="3.200" y="490.700" width="236" height="64.600" rx="2.500" stroke="#ee2a1c" stroke-width="2.800"/>
 <rect x="691.500" y="488" width="60.200" height="65" rx="2.500" stroke="#ee2a1c" stroke-width="2.800"/>
 <path d="M247.700 573.600L264.800 574.100L264 577.200L399.500 649.300L259.800 585L257.800 587.500Z" fill="#f02a1a"/>
 <path d="M753.900 581.400L767.500 587.300L765.200 590L806.600 662.300L757.600 595.600L754.700 597.400Z" fill="#f02a1a"/>
</svg>
<!-- watermark -->
<div class="t" style="left:1126px;top:670px;font-size:33px;line-height:46px;height:46px;color:#fff;text-shadow:1.500px 1.500px 0 #000,2px 2px 1px #000"><span style="font-weight:900">头条</span><span style="font-weight:500;margin-left:10px;font-size:34px;letter-spacing:1.1px">@霜小付</span></div>
<!--OVERLAY-->
</body>
</html>
